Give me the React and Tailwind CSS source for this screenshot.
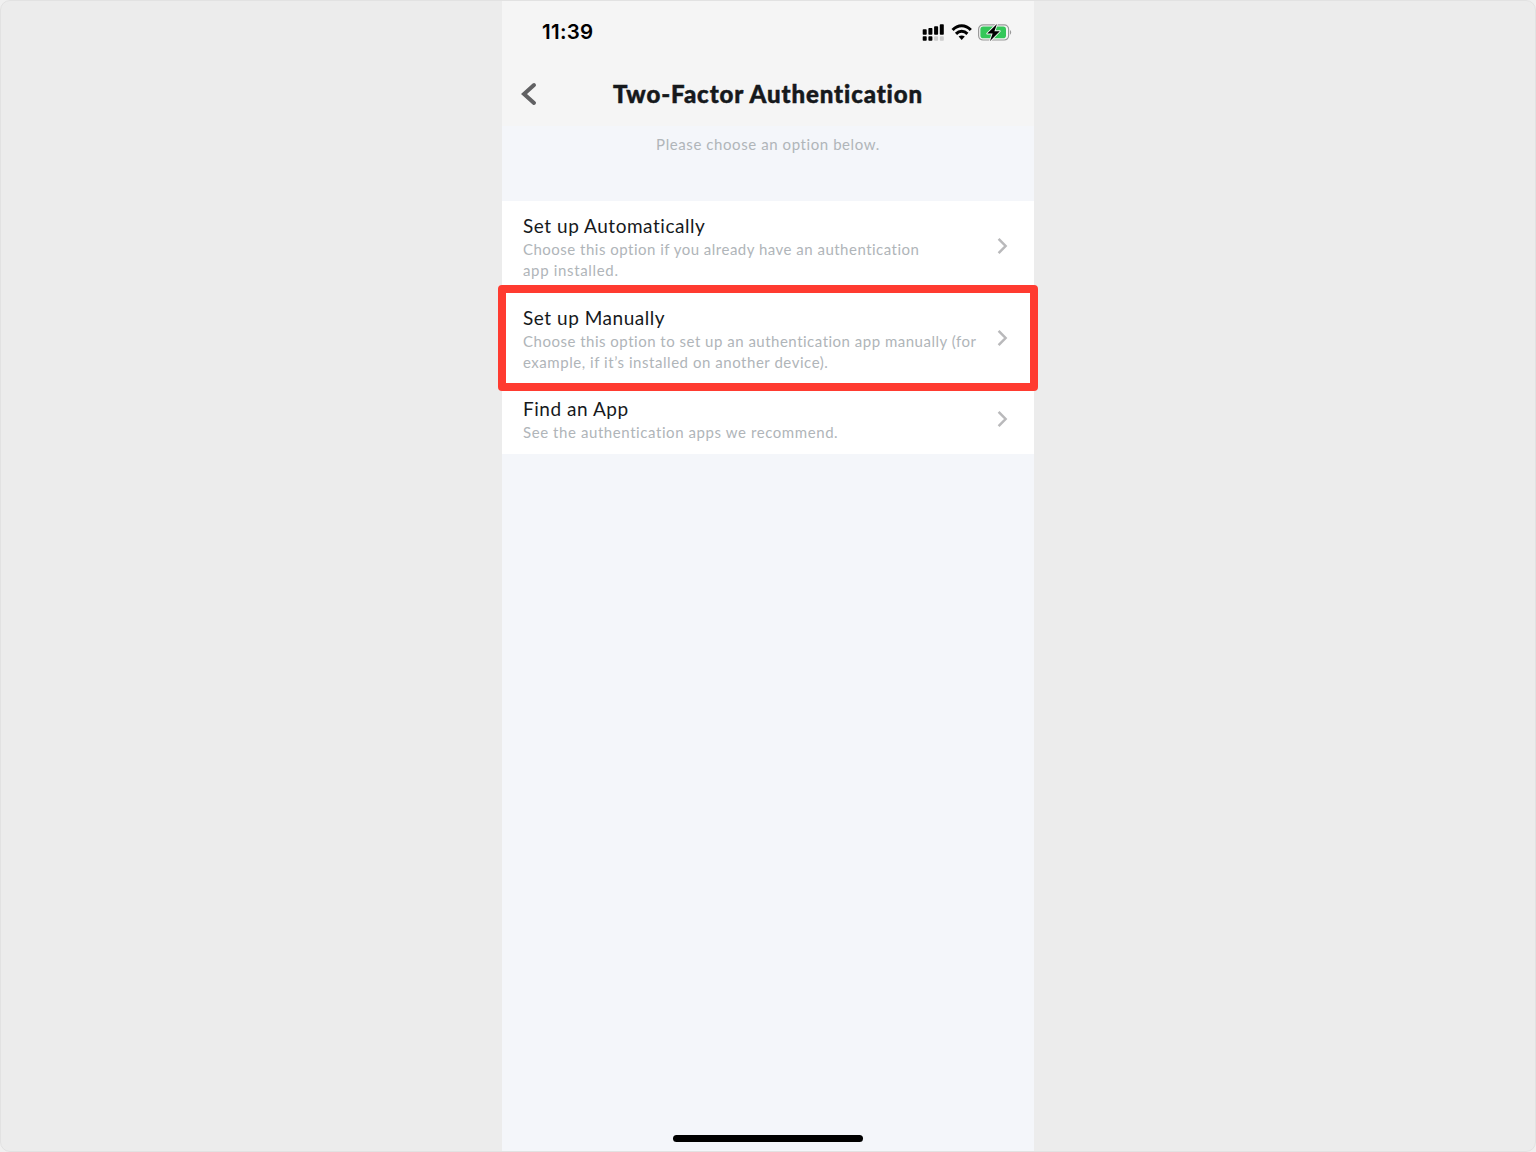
function Chevron() {
  return (
    <svg width="12" height="18" viewBox="0 0 12 18" fill="none" stroke="#b9b9bb" strokeWidth="2.5" className="mb-[1.5px] shrink-0">
      <path d="M1.6 1.8 L8.6 9 L1.6 16.2" />
    </svg>
  );
}

function StatusIcons() {
  return (
    <svg width="92" height="22" viewBox="0 0 92 22" className="-mt-[2px] shrink-0">
      <g fill="#000">
        <rect x="2.7" y="8.2" width="4" height="5.6" rx="0.8" />
        <rect x="8.4" y="7" width="4" height="6.8" rx="0.8" />
        <rect x="14.1" y="5.2" width="4" height="8.6" rx="0.8" />
        <rect x="19.8" y="3.2" width="4" height="10.6" rx="0.8" />
        <rect x="2.7" y="15.3" width="4" height="4.4" rx="0.8" />
        <rect x="8.4" y="15.3" width="4" height="4.4" rx="0.8" />
      </g>
      <g fill="#cccccc">
        <rect x="14.1" y="15.3" width="4" height="4.4" rx="0.8" />
        <rect x="19.8" y="15.3" width="4" height="4.4" rx="0.8" />
      </g>
      <g fill="none" stroke="#000" strokeWidth="3">
        <path d="M32.6 9 C37.8 3.4 45.6 3.4 50.8 9" />
        <path d="M36 12.9 C39.3 9.5 44.1 9.5 47.4 12.9" />
      </g>
      <path d="M38.6 15.6 C40.4 14 43 14 44.8 15.6 L41.7 19 Z" fill="#000" />
      <rect x="58.6" y="3.8" width="30" height="15.2" rx="4.4" fill="none" stroke="#9a9a9a" strokeWidth="1.2" />
      <path d="M90 9 C91.6 9.8 91.6 13 90 13.8 Z" fill="#9a9a9a" />
      <rect x="60.4" y="5.6" width="25.6" height="11.6" rx="2.8" fill="#34c759" />
      <path d="M77 3 L67.2 12.6 H72.6 L70 20 L79.8 10.2 H74.4 Z" fill="#000" stroke="#f5f5f5" strokeWidth="1.8" paintOrder="stroke" strokeLinejoin="round" />
    </svg>
  );
}

function Option({ title, lines, className, highlighted }) {
  return (
    <li className={"relative flex items-center pl-[21px] pr-[25px] " + className}>
      <div className="min-w-0 flex-1">
        <h2 className="whitespace-nowrap text-[19px] leading-[26px] tracking-[0.53px] text-[#16191c]">{title}</h2>
        <p className="whitespace-nowrap text-[15px] leading-[21px] text-[#b0b5b9]">
          {lines.map(([text, tracking]) => (
            <span key={text} className={"block " + tracking}>{text}</span>
          ))}
        </p>
      </div>
      <Chevron />
      {highlighted && (
        <div className="absolute -left-1 -right-1 -top-[7.5px] z-10 h-[106px] rounded-[4px] border-8 border-[#ff3b30]" />
      )}
    </li>
  );
}

export default function App() {
  return (
    <div className="h-[1152px] w-[1536px] bg-[#f0f0f0]">
      <main className="flex h-full w-full justify-center overflow-hidden rounded-[10px] border border-[#e2e2e2] bg-[#ececec] font-['Lato',sans-serif]">
        <section className="flex h-full w-[532px] flex-col bg-[#f4f6fa]">
          <header className="h-[125px] shrink-0 bg-[#f5f5f5]">
            <div className="flex h-[63px] items-center justify-between pl-[40px] pr-[22px]">
              <span className="-mt-px font-['Inter',sans-serif] text-[20.5px] font-semibold tracking-[0.3px] text-black">11:39</span>
              <StatusIcons />
            </div>
            <div className="grid h-[60px] grid-cols-[60px_1fr_60px] items-center">
              <svg width="20" height="26" viewBox="0 0 20 26" fill="none" stroke="#616163" strokeWidth="4" className="ml-[17px]">
                <path d="M15 4 L5 13 L15 22" strokeLinecap="round" />
              </svg>
              <h1 className="-mt-px whitespace-nowrap text-center text-[24px] font-black leading-8 tracking-[0.9px] text-[#16191c] [-webkit-text-stroke:0.5px_#16191c]">Two-Factor Authentication</h1>
            </div>
          </header>
          <p className="h-[75px] shrink-0 pt-[8px] text-center text-[15px] leading-5 tracking-[0.58px] text-[#b0b5b9]">Please choose an option below.</p>
          <ul className="bg-white">
            <Option
              className="h-[91.5px]"
              title="Set up Automatically"
              lines={[
                ["Choose this option if you already have an authentication", "tracking-[0.49px]"],
                ["app installed.", "tracking-[0.66px]"],
              ]}
            />
            <Option
              className="h-[92px]"
              highlighted
              title="Set up Manually"
              lines={[
                ["Choose this option to set up an authentication app manually (for", "tracking-[0.5px]"],
                ["example, if it’s installed on another device).", "tracking-[0.54px]"],
              ]}
            />
            <Option
              className="h-[69.5px]"
              title="Find an App"
              lines={[["See the authentication apps we recommend.", "tracking-[0.58px]"]]}
            />
          </ul>
          <div className="mx-auto mb-[9px] mt-auto h-[7px] w-[190px] shrink-0 rounded-full bg-black" />
        </section>
      </main>
    </div>
  );
}
